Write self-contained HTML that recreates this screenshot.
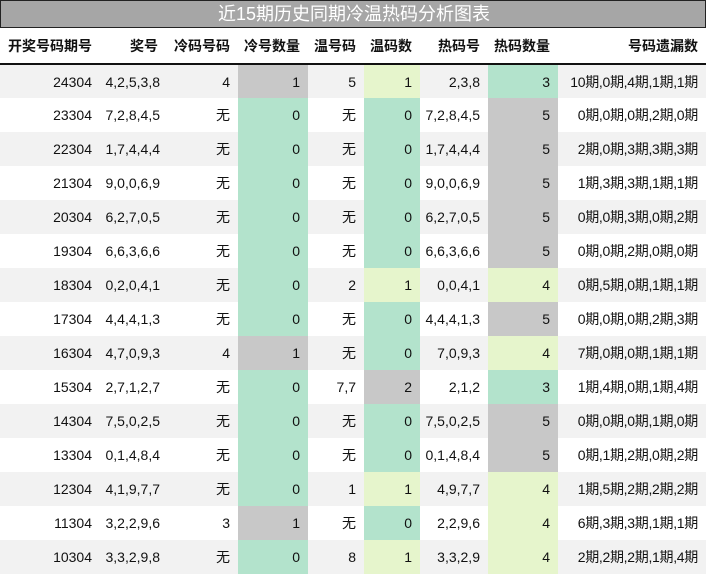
<!DOCTYPE html>
<html><head><meta charset="utf-8"><style>
*{margin:0;padding:0;box-sizing:border-box}
body{width:706px;height:575px;background:#fff;font-family:"Liberation Sans","Noto Sans CJK SC",sans-serif;overflow:hidden}
.title{height:28px;background:#a6a6a6;border:1px solid #222;color:#fff;font-size:18px;line-height:26px;padding-left:217px}
table{border-collapse:collapse;table-layout:fixed;width:706px}
td,th{font-size:14px;text-align:right;padding:0 8px 0 0;white-space:nowrap;color:#111}
th{height:36px;font-weight:bold;border-bottom:2px solid #111}
td{height:34px}
td:nth-child(2){padding-right:6px}
th:first-child{text-align:left;padding-left:8px}
tr.g td{background:#f2f2f2}
tr td.a{background:#c8c8c8}
tr td.b{background:#b3e3cc}
tr td.c{background:#e6f5cc}
td:nth-child(9){letter-spacing:-0.3px}
</style></head><body>
<div class="title">近15期历史同期冷温热码分析图表</div>
<table>
<colgroup><col style="width:100px"><col style="width:66px"><col style="width:72px"><col style="width:70px"><col style="width:56px"><col style="width:56px"><col style="width:68px"><col style="width:70px"><col style="width:148px"></colgroup>
<tr><th>开奖号码期号</th><th>奖号</th><th>冷码号码</th><th>冷号数量</th><th>温号码</th><th>温码数</th><th>热码号</th><th>热码数量</th><th>号码遗漏数</th></tr>
<tr class="g"><td>24304</td><td>4,2,5,3,8</td><td>4</td><td class="a">1</td><td>5</td><td class="c">1</td><td>2,3,8</td><td class="b">3</td><td>10期,0期,4期,1期,1期</td></tr>
<tr><td>23304</td><td>7,2,8,4,5</td><td>无</td><td class="b">0</td><td>无</td><td class="b">0</td><td>7,2,8,4,5</td><td class="a">5</td><td>0期,0期,0期,2期,0期</td></tr>
<tr class="g"><td>22304</td><td>1,7,4,4,4</td><td>无</td><td class="b">0</td><td>无</td><td class="b">0</td><td>1,7,4,4,4</td><td class="a">5</td><td>2期,0期,3期,3期,3期</td></tr>
<tr><td>21304</td><td>9,0,0,6,9</td><td>无</td><td class="b">0</td><td>无</td><td class="b">0</td><td>9,0,0,6,9</td><td class="a">5</td><td>1期,3期,3期,1期,1期</td></tr>
<tr class="g"><td>20304</td><td>6,2,7,0,5</td><td>无</td><td class="b">0</td><td>无</td><td class="b">0</td><td>6,2,7,0,5</td><td class="a">5</td><td>0期,0期,3期,0期,2期</td></tr>
<tr><td>19304</td><td>6,6,3,6,6</td><td>无</td><td class="b">0</td><td>无</td><td class="b">0</td><td>6,6,3,6,6</td><td class="a">5</td><td>0期,0期,2期,0期,0期</td></tr>
<tr class="g"><td>18304</td><td>0,2,0,4,1</td><td>无</td><td class="b">0</td><td>2</td><td class="c">1</td><td>0,0,4,1</td><td class="c">4</td><td>0期,5期,0期,1期,1期</td></tr>
<tr><td>17304</td><td>4,4,4,1,3</td><td>无</td><td class="b">0</td><td>无</td><td class="b">0</td><td>4,4,4,1,3</td><td class="a">5</td><td>0期,0期,0期,2期,3期</td></tr>
<tr class="g"><td>16304</td><td>4,7,0,9,3</td><td>4</td><td class="a">1</td><td>无</td><td class="b">0</td><td>7,0,9,3</td><td class="c">4</td><td>7期,0期,0期,1期,1期</td></tr>
<tr><td>15304</td><td>2,7,1,2,7</td><td>无</td><td class="b">0</td><td>7,7</td><td class="a">2</td><td>2,1,2</td><td class="b">3</td><td>1期,4期,0期,1期,4期</td></tr>
<tr class="g"><td>14304</td><td>7,5,0,2,5</td><td>无</td><td class="b">0</td><td>无</td><td class="b">0</td><td>7,5,0,2,5</td><td class="a">5</td><td>0期,0期,0期,1期,0期</td></tr>
<tr><td>13304</td><td>0,1,4,8,4</td><td>无</td><td class="b">0</td><td>无</td><td class="b">0</td><td>0,1,4,8,4</td><td class="a">5</td><td>0期,1期,2期,0期,2期</td></tr>
<tr class="g"><td>12304</td><td>4,1,9,7,7</td><td>无</td><td class="b">0</td><td>1</td><td class="c">1</td><td>4,9,7,7</td><td class="c">4</td><td>1期,5期,2期,2期,2期</td></tr>
<tr><td>11304</td><td>3,2,2,9,6</td><td>3</td><td class="a">1</td><td>无</td><td class="b">0</td><td>2,2,9,6</td><td class="c">4</td><td>6期,3期,3期,1期,1期</td></tr>
<tr class="g"><td>10304</td><td>3,3,2,9,8</td><td>无</td><td class="b">0</td><td>8</td><td class="c">1</td><td>3,3,2,9</td><td class="c">4</td><td>2期,2期,2期,1期,4期</td></tr>
</table>
</body></html>
